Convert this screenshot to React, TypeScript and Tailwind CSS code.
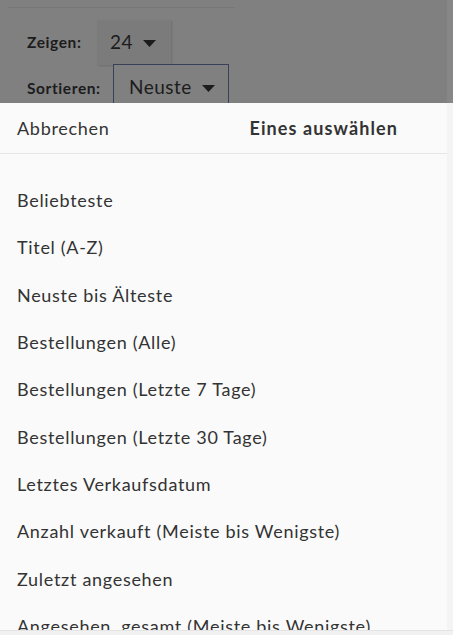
import React from "react";

const options = [
  "Beliebteste",
  "Titel (A-Z)",
  "Neuste bis Älteste",
  "Bestellungen (Alle)",
  "Bestellungen (Letzte 7 Tage)",
  "Bestellungen (Letzte 30 Tage)",
  "Letztes Verkaufsdatum",
  "Anzahl verkauft (Meiste bis Wenigste)",
  "Zuletzt angesehen",
  "Angesehen, gesamt (Meiste bis Wenigste)",
];

function Caret() {
  return (
    <svg width="13" height="7" viewBox="0 0 13 7" className="ml-[10px] mt-[2px]">
      <path d="M0 0h13L6.5 7z" fill="currentColor" />
    </svg>
  );
}

export default function App() {
  return (
    <div
      className="flex h-[635px] w-[453px] flex-col overflow-hidden bg-[#fafafa] text-[#333]"
      style={{ fontFamily: "Lato, 'Open Sans', sans-serif" }}
    >
      <div className="flex min-h-0 flex-1">
        <div className="flex w-[447px] flex-col overflow-hidden">
          <div className="h-[103px] shrink-0 overflow-hidden bg-[#808080] text-[#1c1c1c]">
            <div className="ml-2 mt-[7px] w-[227px] border-t border-[#767676]" />
            <div className="mt-3 flex items-center">
              <span className="ml-[27px] w-[70px] text-[15.5px] font-bold tracking-[0.6px]">Zeigen:</span>
              <div className="flex h-[45px] w-[74px] items-center bg-[#7b7b7b] pl-[13px] text-[19px] tracking-[0.5px] shadow-[1px_1px_2px_rgba(0,0,0,0.15)]">
                24
                <Caret />
              </div>
            </div>
            <div className="-mt-px flex items-center">
              <span className="ml-[27px] mt-[4px] w-[86px] text-[15.5px] font-bold tracking-[0.6px]">Sortieren:</span>
              <div className="flex h-[45px] w-[116px] items-center border border-[#39405a] bg-[#808080] pl-[15px] pt-[2px] text-[19px] tracking-[0.5px]">
                Neuste
                <Caret />
              </div>
            </div>
          </div>
          <div className="flex h-[51px] shrink-0 items-center justify-between border-b border-[#e6e6e6] pl-[17px] pr-[49px] text-[18px]">
            <span className="tracking-[0.7px]">Abbrechen</span>
            <span className="font-bold tracking-[1.1px]">Eines auswählen</span>
          </div>
          <ul className="flex flex-col pt-[23px]">
            {options.map((o) => (
              <li
                key={o}
                className="flex h-[47.3px] shrink-0 items-center whitespace-nowrap pl-[17px] text-[18px] tracking-[0.7px]"
              >
                {o}
              </li>
            ))}
          </ul>
        </div>
        <div className="flex w-[6px] flex-col">
          <div className="h-[103px] bg-[#878787]" />
          <div className="flex-1 bg-[#f4f4f4]" />
        </div>
      </div>
      <div className="h-[5px] shrink-0 border-t border-[#e4e4e4] bg-[#f1f1f1]" />
    </div>
  );
}
